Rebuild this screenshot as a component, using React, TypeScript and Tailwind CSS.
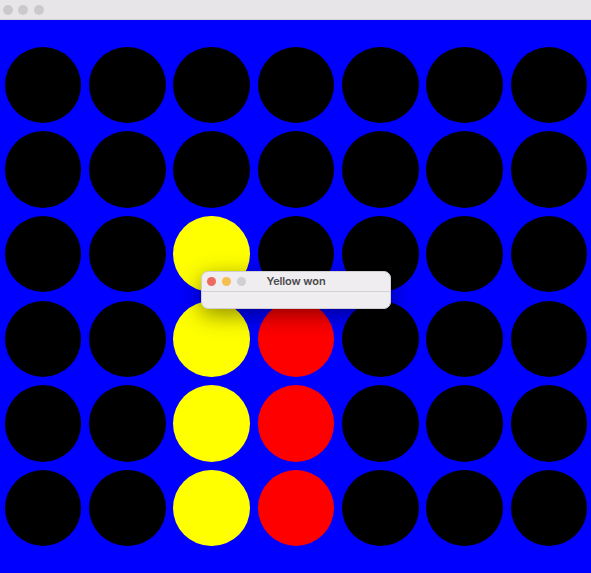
import React from "react";

type Cell = "E" | "Y" | "R";

const board: Cell[][] = [
  ["E", "E", "E", "E", "E", "E", "E"],
  ["E", "E", "E", "E", "E", "E", "E"],
  ["E", "E", "Y", "E", "E", "E", "E"],
  ["E", "E", "Y", "R", "E", "E", "E"],
  ["E", "E", "Y", "R", "E", "E", "E"],
  ["E", "E", "Y", "R", "E", "E", "E"],
];

function Disc({ c }: { c: Cell }) {
  const color =
    c === "Y" ? "bg-[#ffff00]" : c === "R" ? "bg-[#ff0000]" : "bg-black";
  return (
    <div className="flex items-center justify-center h-[84.6px]">
      <div className={`w-[76.5px] h-[76.5px] rounded-full ${color}`} />
    </div>
  );
}

export default function App() {
  return (
    <div
      className="relative w-[591px] h-[573px] overflow-hidden bg-[#0000ff]"
      style={{ fontFamily: '"Inter", "Liberation Sans", sans-serif' }}
    >
      <div className="h-[20px] bg-[#e7e5e8] flex items-center pl-[3px] gap-[5.3px] border-b border-[#d6d4d8]">
        <div className="w-[10px] h-[10px] rounded-full bg-[#cbc9cc]" />
        <div className="w-[10px] h-[10px] rounded-full bg-[#cbc9cc]" />
        <div className="w-[10px] h-[10px] rounded-full bg-[#cbc9cc]" />
      </div>
      <div className="h-[553px] flex items-center">
        <div className="w-full grid grid-cols-7 pl-[1px]">
          {board.flat().map((c, i) => (
            <Disc key={i} c={c} />
          ))}
        </div>
      </div>

      <div className="absolute left-[201px] top-[271px] w-[190px] h-[38px] rounded-[7px] bg-[#efedf0] shadow-[0_6px_22px_rgba(0,0,0,0.45)] border border-[#d0ced2] overflow-hidden">
        <div className="relative h-[20px] flex items-center pl-[5px] gap-[6px] border-b border-[#d3d1d5]">
          <div className="w-[9px] h-[9px] rounded-full bg-[#ec6a5e]" />
          <div className="w-[9px] h-[9px] rounded-full bg-[#f4bf4f]" />
          <div className="w-[9px] h-[9px] rounded-full bg-[#d0cfd3]" />
          <div className="absolute inset-0 flex items-center justify-center text-[11px] font-semibold text-[#4a484c] tracking-[-0.1px]">
            Yellow won
          </div>
        </div>
      </div>
    </div>
  );
}
